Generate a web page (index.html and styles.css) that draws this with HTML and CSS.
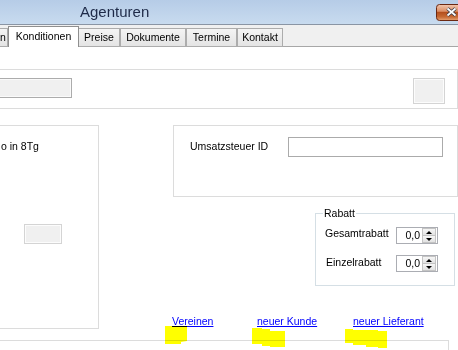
FILE: index.html
```html
<!DOCTYPE html>
<html>
<head>
<meta charset="utf-8">
<link rel="stylesheet" href="styles.css">
</head>
<body>
<div class="titlebar">
  <span class="title">Agenturen</span>
  <span class="close">
    <svg width="22" height="17" viewBox="0 0 22 17">
      <defs>
        <linearGradient id="cg" x1="0" y1="0" x2="0" y2="1">
          <stop offset="0" stop-color="#f2c7b0"/>
          <stop offset="0.42" stop-color="#dc8f66"/>
          <stop offset="0.5" stop-color="#b5501e"/>
          <stop offset="0.78" stop-color="#c76a34"/>
          <stop offset="1" stop-color="#e9a677"/>
        </linearGradient>
      </defs>
      <rect x="0.5" y="0.5" width="30" height="16" rx="3" fill="url(#cg)" stroke="#6b2812"/>
      <path d="M11.5 4.5 L19.5 11.5 M19.5 4.5 L11.5 11.5" stroke="#3b3b48" stroke-width="3.4" fill="none"/>
      <path d="M11.5 4.5 L19.5 11.5 M19.5 4.5 L11.5 11.5" stroke="#ffffff" stroke-width="1.7" fill="none"/>
    </svg>
  </span>
</div>
<div class="tabstrip">
  <div class="tab partial">n</div>
  <div class="tab active">Konditionen</div>
  <div class="tab w-preise">Preise</div>
  <div class="tab w-dok">Dokumente</div>
  <div class="tab w-term">Termine</div>
  <div class="tab w-kont">Kontakt</div>
</div>
<div class="page">
  <div class="panel top-panel">
    <div class="combo"></div>
    <div class="btn square"></div>
  </div>
  <div class="row">
    <div class="panel left-panel">
      <div class="label">o in 8Tg</div>
      <div class="btn small"></div>
    </div>
    <div class="rightcol">
      <div class="panel ust-panel">
        <span class="ust-label">Umsatzsteuer ID</span>
        <div class="textbox"></div>
      </div>
      <fieldset class="group">
        <legend>Rabatt</legend>
        <div class="spin-row first">
          <span class="spin-label">Gesamtrabatt</span>
          <div class="spin">
            <span class="spin-val">0,0</span>
            <span class="spin-btns">
              <span class="sb up"></span>
              <span class="sb down"></span>
            </span>
          </div>
        </div>
        <div class="spin-row second">
          <span class="spin-label">Einzelrabatt</span>
          <div class="spin">
            <span class="spin-val">0,0</span>
            <span class="spin-btns">
              <span class="sb up"></span>
              <span class="sb down"></span>
            </span>
          </div>
        </div>
      </fieldset>
      <div class="links">
        <span class="lk l1"><a href="#">Vereinen</a></span>
        <span class="lk l2"><a href="#">neuer Kunde</a></span>
        <span class="lk"><a href="#">neuer Lieferant</a></span>
      </div>
    </div>
  </div>
  <div class="panel bottom-panel"></div>
</div>
<svg class="marks" width="458" height="350" viewBox="0 0 458 350">
  <polygon fill="#ffff00" points="165,326 187,326 187,341 181,342 181,344 165,344"/>
  <polygon fill="#ffff00" points="252,328 262,328 262,329 270,329 270,331 285,331 285,347 270,347 270,346 262,346 262,344 252,344"/>
  <polygon fill="#ffff00" points="345,329 353,329 353,330 378,330 378,331 387,331 387,348 378,348 378,347 366,347 366,345 353,345 353,343 345,343"/>
</svg>
</body>
</html>
```
FILE: styles.css
```css
html, body {
  margin: 0;
  padding: 0;
}
body {
  width: 458px;
  height: 350px;
  overflow: hidden;
  position: relative;
  background: #ffffff;
  font-family: "Liberation Sans", Arial, sans-serif;
  font-size: 10.5px;
  line-height: 13px;
  color: #000;
}

/* title bar */
.titlebar {
  height: 24px;
  border-bottom: 1px solid #8a95a4;
  background: linear-gradient(#b6cce7, #c8dbef);
  display: flex;
  justify-content: space-between;
  align-items: flex-start;
}
.title {
  font-size: 15px;
  line-height: 24px;
  color: #1e2a48;
  padding-left: 80px;
}
.close {
  margin-top: 4px;
  display: block;
  height: 17px;
}
.close svg {
  display: block;
}

/* tabs */
.tabstrip {
  height: 21px;
  border-bottom: 1px solid #a7a7a7;
  background: #f0f0f0;
  display: flex;
  align-items: flex-end;
}
.tab {
  box-sizing: border-box;
  height: 19px;
  margin-bottom: -1px;
  border: 1px solid #acacac;
  background: linear-gradient(#f4f4f4, #e4e4e4);
  text-align: center;
  padding-top: 1px;
  line-height: 15px;
  white-space: nowrap;
  overflow: hidden;
}
.partial {
  margin-left: -1px;
  width: 9px;
  text-align: right;
  padding-right: 2px;
}
.active {
  width: 71px;
  height: 21px;
  border-color: #8f8f8f;
  border-bottom: none;
  background: #ffffff;
  padding-top: 2px;
  position: relative;
}
.w-preise { width: 42px; margin-left: -1px; }
.w-dok { width: 66px; }
.w-term { width: 51px; }
.w-kont { width: 46px; }

/* page */
.page {
  background: #ffffff;
}
.panel {
  box-sizing: border-box;
  border: 1px solid #dcdcdc;
}
.top-panel {
  margin: 22px 0 0 -40px;
  width: 498px;
  height: 40px;
  display: flex;
  justify-content: space-between;
  align-items: flex-start;
  padding: 8px 12px 0 0;
}
.combo {
  box-sizing: border-box;
  margin-left: 10px;
  width: 101px;
  height: 20px;
  border: 1px solid #acacac;
  background: #f0f0f0;
  box-shadow: inset 0 0 0 1px #fafafa;
}
.btn {
  box-sizing: border-box;
  border: 1px solid #d4d4d4;
  background: #f0f0f0;
  box-shadow: inset 0 0 0 1px #fcfcfc;
}
.square {
  width: 32px;
  height: 26px;
}

.row {
  display: flex;
  align-items: flex-start;
  margin-top: 16px;
}
.left-panel {
  margin-left: -40px;
  width: 139px;
  height: 204px;
  padding: 14px 0 0 40px;
}
.label {
  white-space: nowrap;
}
.small {
  margin: 71px 0 0 23px;
  width: 38px;
  height: 20px;
}

.rightcol {
  margin-left: 74px;
  width: 285px;
}
.ust-panel {
  height: 72px;
  padding: 11px 0 0 16px;
  display: flex;
  align-items: flex-start;
}
.ust-label {
  width: 98px;
  margin-top: 3px;
}
.textbox {
  box-sizing: border-box;
  width: 155px;
  height: 20px;
  border: 1px solid #ababab;
  background: #fff;
}

.group {
  box-sizing: border-box;
  margin: 10px 0 0 142px;
  width: 140px;
  border: 1px solid #d5dfe5;
  padding: 0 0 13px 9px;
  min-inline-size: 0;
}
.group legend {
  padding: 0 1px;
  margin-left: -2px;
  line-height: 13px;
}
.spin-row {
  display: flex;
  align-items: flex-start;
}
.first { margin-top: 7px; }
.second { margin-top: 11px; }
.spin-label {
  width: 71px;
  white-space: nowrap;
}
.second .spin-label {
  padding-left: 1px;
  width: 70px;
  margin-top: 1px;
}
.spin {
  box-sizing: border-box;
  width: 42px;
  height: 17px;
  border: 1px solid #abadb3;
  background: #fff;
  display: flex;
}
.spin-val {
  flex: 1;
  text-align: right;
  padding-right: 2px;
  line-height: 15px;
}
.spin-btns {
  width: 14px;
  margin-right: 1px;
  display: flex;
  flex-direction: column;
}
.sb {
  box-sizing: border-box;
  flex: 1;
  border: 1px solid #c4c4c4;
  background: linear-gradient(#f6f6f6, #e2e2e2);
  display: flex;
  align-items: center;
  justify-content: center;
}
.sb.down {
  border-top: none;
}
.sb::after {
  content: "";
  width: 0;
  height: 0;
  border-left: 3px solid transparent;
  border-right: 3px solid transparent;
}
.up::after {
  border-bottom: 3px solid #000;
}
.down::after {
  border-top: 3px solid #000;
}

.links {
  display: flex;
  margin: 29px 0 0 -1px;
  white-space: nowrap;
}
.lk a {
  color: #0000ff;
  text-decoration: underline;
}
.l1 { width: 85px; }
.l2 { width: 96px; }

.bottom-panel {
  margin: 11px 0 0 -40px;
  width: 489px;
  height: 10px;
  border-bottom: none;
}

.marks {
  position: absolute;
  left: 0;
  top: 0;
  pointer-events: none;
  mix-blend-mode: multiply;
}
```
